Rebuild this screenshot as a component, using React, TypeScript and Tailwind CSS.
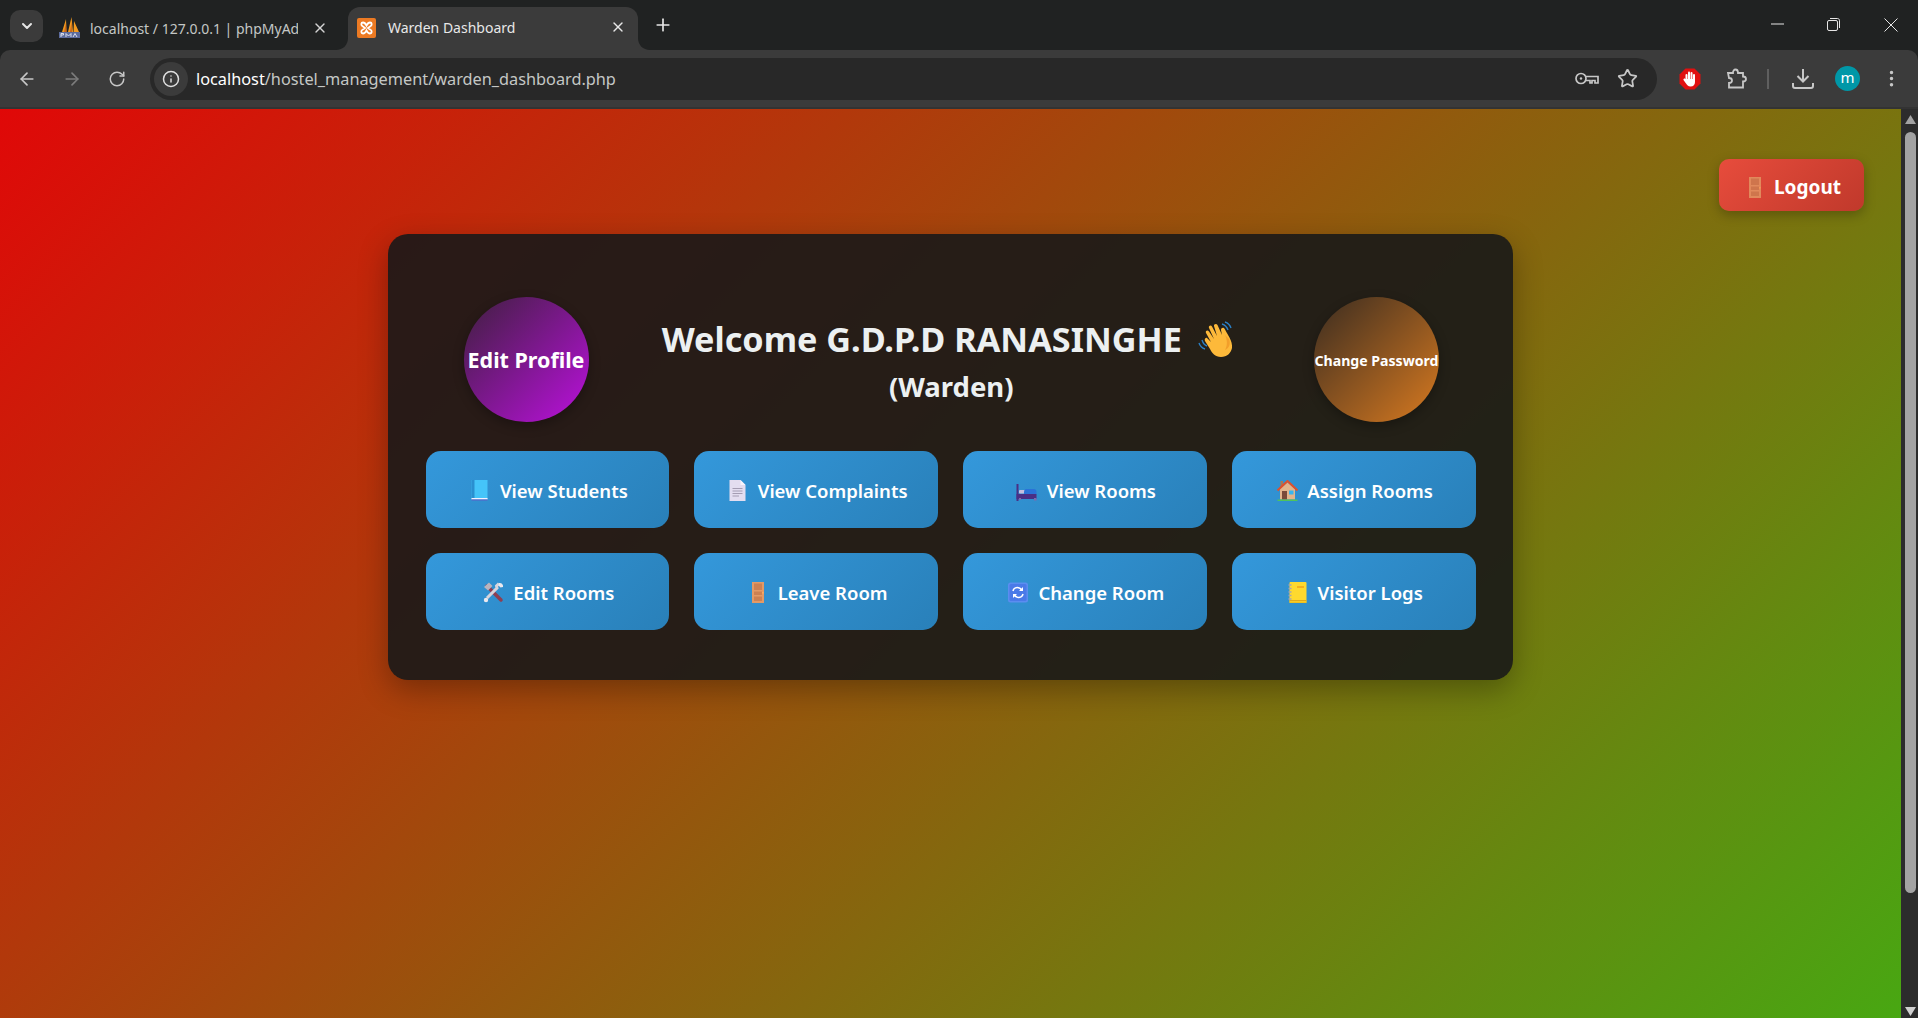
import { ArrowLeft, ArrowRight, ChevronDown, EllipsisVertical, Info, Plus, RotateCw, Star, X } from 'lucide-react';
import type { ReactNode } from 'react';

function BookIcon() {
  return (
    <svg width="17" height="21" viewBox="0 0 17 21">
      <rect x="0.5" y="0" width="16" height="19" fill="#45c4f9" />
      <rect x="0.5" y="0" width="3" height="19" fill="#2a8fd0" />
      <rect x="0.5" y="18" width="16" height="1.5" fill="#f2f2ff" />
      <rect x="0.5" y="19.5" width="16" height="1" fill="#5c5fc8" />
    </svg>
  );
}

function DocIcon() {
  return (
    <svg width="17" height="21" viewBox="0 0 17 21">
      <path d="M0.5 0H11.5L16.5 5V21H0.5Z" fill="#e3ddf0" />
      <path d="M11.5 0L16.5 5H11.5Z" fill="#f7f4fc" />
      <path d="M3.5 8.5H13.5M3.5 11H13.5M3.5 13.5H13.5M3.5 16H10" stroke="#a49cb2" strokeWidth="1" />
    </svg>
  );
}

function BedIcon() {
  return (
    <svg width="21" height="20" viewBox="0 0 21 20">
      <rect x="0.5" y="3" width="2" height="17" fill="#4a2f85" />
      <rect x="3" y="9" width="7" height="3.5" rx="1" fill="#c6bfe0" />
      <path d="M8 11C8 8.5 9.5 8 11 8H18C19.5 8 20.5 9 20.5 11V13H8Z" fill="#2a72d8" />
      <rect x="0.5" y="13" width="20" height="5" fill="#4a2f85" />
      <rect x="18" y="17" width="2.5" height="2.5" fill="#7a6bb0" />
      <rect x="3" y="17" width="2" height="2" fill="#7a6bb0" />
    </svg>
  );
}

function HouseIcon() {
  return (
    <svg width="21" height="21" viewBox="0 0 21 21">
      <rect x="3.5" y="1" width="2.5" height="6" fill="#a87858" />
      <path d="M3 9L10.5 2.5L18 9V19.5H3Z" fill="#e3b48c" />
      <path d="M0.5 10.5L10.5 1L20.5 10.5" fill="none" stroke="#e0502c" strokeWidth="2" />
      <rect x="5" y="11" width="5" height="8.5" fill="#7a4a3a" />
      <rect x="12" y="10.5" width="4.5" height="4" fill="#38b6f0" />
      <rect x="0.5" y="19.5" width="20" height="1.5" fill="#4fc45a" />
    </svg>
  );
}

function ToolsIcon() {
  return (
    <svg width="21" height="21" viewBox="0 0 21 21">
      <path d="M4 4L18 18" stroke="#8f3f52" strokeWidth="3.5" strokeLinecap="round" />
      <path d="M16 1.5L13.5 4L14 6L4 16" stroke="#d8d4dc" strokeWidth="3" fill="none" />
      <path d="M1 5L6 0.5L9.5 4L5 8.5Z" fill="#b9b4bf" />
      <path d="M16 1C18.5 0.5 20.5 2.5 20 5L17.5 5.5L15.5 3.5Z" fill="#ece9ef" />
      <circle cx="3" cy="18" r="2.2" fill="#ece9ef" />
    </svg>
  );
}

function DoorIcon({ className }: { className?: string }) {
  return (
    <svg width="12" height="21" viewBox="0 0 12 21" className={className}>
      <rect x="0" y="0" width="12" height="21" fill="#e39a66" />
      <rect x="2" y="1.5" width="8" height="6.5" fill="#cd8152" />
      <rect x="2" y="9.5" width="8" height="3.5" fill="#cd8152" />
      <rect x="2" y="14.5" width="8" height="4.5" fill="#cd8152" />
      <rect x="10.2" y="10" width="1.4" height="1.6" fill="#ffb060" />
    </svg>
  );
}

function RefreshIcon() {
  return (
    <svg width="20" height="21" viewBox="0 0 20 21">
      <rect x="0" y="0.5" width="20" height="20" rx="2.5" fill="#5b8df0" />
      <rect x="1.5" y="2" width="17" height="17" rx="1.5" fill="#4a7ae8" />
      <path d="M5 9C5.6 6.5 8 5.2 10.5 5.7C11.8 6 12.7 6.6 13.5 7.7M15 12C14.4 14.5 12 15.8 9.5 15.3C8.2 15 7.3 14.4 6.5 13.3" stroke="#fff" strokeWidth="1.6" fill="none" />
      <path d="M15 5V9H11ZM5 16V12H9Z" fill="#fff" />
    </svg>
  );
}

function NotebookIcon() {
  return (
    <svg width="19" height="21" viewBox="0 0 19 21">
      <rect x="1.5" y="0" width="17" height="21" rx="1" fill="#fed92e" />
      <rect x="1.5" y="18" width="17" height="1" fill="#e0a81c" />
      <rect x="1.5" y="19.5" width="17" height="1.5" fill="#f0c020" />
      <rect x="9" y="4" width="7" height="2" fill="#f4b01c" />
      <path d="M0.5 3H3.5M0.5 6.5H3.5M0.5 10H3.5M0.5 13.5H3.5M0.5 17H3.5" stroke="#a8a4b0" strokeWidth="1.4" />
    </svg>
  );
}

function WaveIcon() {
  return (
    <svg width="36" height="36" viewBox="0 0 36 36">
      <path d="M24 3C27 4 29 6 30 9M27 1C30 2 32 4 33 7M1 22C2 25 4 27 7 28M4 19C5 22 6 24 9 25" stroke="#2a7fc4" strokeWidth="1.4" fill="none" />
      <path d="M9 17L13 21L8 12C7 10 9.500 8.500 11 10.500L16 18L11 7C10 5 13 3.500 14 5.500L19 15L16 5C15.500 3 18.500 2 19.500 4L24 14L23 9C23 6.500 26 6 27 8.500C29 13 35 20 34 27C33 32 29 36 23 36C17 36 14 32 12 28L7 20C6 18 8 16 9 17Z" fill="#fdb93a" />
      <path d="M27 14C29 18 30 24 27 29C31 27 33 23 31 18Z" fill="#f29f2b" />
    </svg>
  );
}

const actions: { label: string; icon: ReactNode }[] = [
  { label: 'View Students', icon: <BookIcon /> },
  { label: 'View Complaints', icon: <DocIcon /> },
  { label: 'View Rooms', icon: <BedIcon /> },
  { label: 'Assign Rooms', icon: <HouseIcon /> },
  { label: 'Edit Rooms', icon: <ToolsIcon /> },
  { label: 'Leave Room', icon: <DoorIcon /> },
  { label: 'Change Room', icon: <RefreshIcon /> },
  { label: 'Visitor Logs', icon: <NotebookIcon /> },
];

function PmaIcon() {
  return (
    <svg width="21" height="22" viewBox="0 0 21 22">
      <path d="M3 15L7 2L7.500 15ZM9 15L12.500 0L14 15ZM14.500 15L15 4L20 15Z" fill="#f29a1f" />
      <path d="M5 15L7 6L7.500 15ZM11 15L12.500 5L13 15Z" fill="#c9651b" />
      <rect x="0" y="15" width="21" height="6" fill="#5c6b9c" />
      <path d="M2 20V16.500H4.500V18H2M7 20V16.500L9.500 19L12 16.500V20M14 20L16 16.500L18 20" stroke="#e8ecf6" strokeWidth="0.9" fill="none" />
    </svg>
  );
}

function XamppIcon() {
  return (
    <svg width="19" height="20" viewBox="0 0 19 20">
      <rect width="19" height="20" rx="2" fill="#ec7a23" />
      <path d="M6 4.500C4 4.500 3.500 7.500 6 8.500L8 10L6 11.500C3.500 12.500 4 15.500 6 15.500C8 15.500 9.500 12.500 9.500 12.500C9.500 12.500 11 15.500 13 15.500C15 15.500 15.500 12.500 13 11.500L11 10L13 8.500C15.500 7.500 15 4.500 13 4.500C11 4.500 9.500 7.500 9.500 7.500C9.500 7.500 8 4.500 6 4.500Z" fill="none" stroke="#fff" strokeWidth="1.8" />
    </svg>
  );
}

function BrowserTabs() {
  return (
    <div className="h-[50px] bg-[#202222] flex items-start shrink-0 pl-[10px]">
      <div className="mt-[10px] w-[33px] h-[32px] rounded-[10px] bg-[#3b3b3b] flex items-center justify-center">
        <ChevronDown size={16} strokeWidth={3} className="text-[#e6e6e6]" />
      </div>
      <div className="ml-[16px] w-[289px] h-[42px] mt-[8px] flex items-center pb-[2px] text-[14px] text-[#c4c7c5]">
        <PmaIcon />
        <span className="ml-[10px] w-[208px] overflow-hidden whitespace-nowrap">localhost / 127.0.0.1 | phpMyAdmin</span>
        <X size={16} strokeWidth={2} className="ml-[14px] text-[#d4d4d4]" />
      </div>
      <div className="relative w-[290px] h-[43px] mt-[7px] bg-[#3b3b3b] rounded-t-[12px] flex items-center pl-[9px] pb-[2px] text-[14px] text-[#e8e8e8]">
        <svg width="12" height="12" viewBox="0 0 12 12" className="absolute left-[-12px] bottom-0">
          <path d="M12 0V12H0C7 12 12 7 12 0Z" fill="#3b3b3b" />
        </svg>
        <XamppIcon />
        <span className="ml-[12px] whitespace-nowrap">Warden Dashboard</span>
        <X size={16} strokeWidth={2} className="absolute left-[262px] top-[12px] text-[#e8e8e8]" />
        <svg width="12" height="12" viewBox="0 0 12 12" className="absolute right-[-12px] bottom-0">
          <path d="M0 0V12H12C5 12 0 7 0 0Z" fill="#3b3b3b" />
        </svg>
      </div>
      <Plus size={20} strokeWidth={2} className="ml-[15px] mt-[15px] text-[#e6e6e6]" />
      <div className="ml-auto flex items-start text-[#e6e6e6]">
        <svg width="13" height="2" viewBox="0 0 13 2" className="mt-[23px]">
          <path d="M0 1H13" stroke="currentColor" strokeWidth="1" />
        </svg>
        <svg width="13" height="13" viewBox="0 0 13 13" className="ml-[43px] mt-[18px]">
          <rect x="0.500" y="2.500" width="10" height="10" rx="1.500" fill="none" stroke="currentColor" />
          <path d="M3 0.500H10.500C11.600 0.500 12.500 1.400 12.500 2.500V10" fill="none" stroke="currentColor" />
        </svg>
        <svg width="14" height="14" viewBox="0 0 14 14" className="ml-[44px] mr-[20px] mt-[18px]">
          <path d="M0.500 0.500L13.500 13.500M13.500 0.500L0.500 13.500" stroke="currentColor" strokeWidth="1" />
        </svg>
      </div>
    </div>
  );
}

function BrowserToolbar() {
  return (
    <div className="h-[59px] bg-[#3b3b3b] rounded-t-[10px] border-b-2 border-[#333333] flex items-center shrink-0 text-[#c7c7c7]">
      <ArrowLeft size={20} strokeWidth={2} className="ml-[17px]" />
      <ArrowRight size={20} strokeWidth={2} className="ml-[25px] text-[#7c7c7c]" />
      <RotateCw size={18} strokeWidth={2} className="ml-[26px]" />
      <div className="ml-[24px] w-[1507px] h-[42px] rounded-full bg-[#282828] flex items-center">
        <div className="w-[34px] h-[34px] ml-[4px] rounded-full bg-[#3b3b3b] flex items-center justify-center">
          <Info size={18} strokeWidth={2} className="text-[#e0e0e0]" />
        </div>
        <span className="ml-[8px] pt-[2px] text-[16.3px] text-[#c4c7c5] whitespace-nowrap">
          <span className="text-white">localhost</span>/hostel_management/warden_dashboard.php
        </span>
        <svg width="24" height="13" viewBox="0 0 24 13" fill="none" stroke="#c7c7c7" strokeWidth="1.700" className="ml-auto">
          <circle cx="6" cy="6.500" r="5" />
          <circle cx="6" cy="6.500" r="1.200" fill="#c7c7c7" stroke="none" />
          <path d="M11 4.500H23V11H20V8.500H17V11H15V8.500H11" />
        </svg>
        <Star size={21} strokeWidth={2} className="ml-[18px] mr-[19px]" />
      </div>
      <svg width="22" height="22" viewBox="0 0 22 22" className="ml-[22px]">
        <path d="M6.500 0.500H15.500L21.500 6.500V15.500L15.500 21.500H6.500L0.500 15.500V6.500Z" fill="#e01010" />
        <rect x="6.500" y="6" width="2" height="8" rx="1" fill="#fff" />
        <rect x="9" y="3.500" width="2" height="9" rx="1" fill="#fff" />
        <rect x="11.500" y="4" width="2" height="9" rx="1" fill="#fff" />
        <rect x="14" y="6" width="2" height="8" rx="1" fill="#fff" />
        <path d="M6.500 11H16V14C16 16.500 14.500 18.500 11.500 18.500C9 18.500 8 17 7 15.500L4.500 12C4 11 5.500 10 6.500 11Z" fill="#fff" />
      </svg>
      <svg width="21" height="21" viewBox="0 0 21 21" fill="none" stroke="#c7c7c7" strokeWidth="1.800" className="ml-[25px]">
        <path d="M2 5H7C7 3 8 1.500 9.500 1.500C11 1.500 12 3 12 5H17V8.500C19 8.500 20 9.500 20 11C20 12.500 19 13.500 17 13.500V19.500H3V15C5 15 6 14 6 12.500C6 11 5 10 3 10Z" />
      </svg>
      <div className="ml-[20px] w-[2px] h-[20px] bg-[#5f5f5f]" />
      <svg width="22" height="21" viewBox="0 0 22 21" fill="none" stroke="#c7c7c7" strokeWidth="2" className="ml-[23px]">
        <path d="M11 1V13M5.500 8L11 13.500L16.500 8M1 15V18C1 19.200 1.800 20 3 20H19C20.200 20 21 19.200 21 18V15" />
      </svg>
      <div className="ml-[21px] w-[25px] h-[25px] rounded-full bg-[#0097a7] flex items-center justify-center pb-[2px] text-[15px] text-white">m</div>
      <EllipsisVertical size={21} strokeWidth={2} className="ml-[21px]" />
    </div>
  );
}

function Scrollbar() {
  return (
    <div className="w-[17px] bg-[#2c2c2c] flex flex-col items-center shrink-0 pl-[1px]">
      <svg width="11" height="9" viewBox="0 0 11 9" className="mt-[6px]">
        <path d="M5.500 0L11 9H0Z" fill="#a3a3a3" />
      </svg>
      <div className="mt-[8px] w-[11px] h-[761px] rounded-full bg-[#a3a3a3]" />
      <svg width="11" height="9" viewBox="0 0 11 9" className="mt-auto mb-[2px]">
        <path d="M5.500 9L11 0H0Z" fill="#d0d0d0" />
      </svg>
    </div>
  );
}

export default function App() {
  return (
    <div className="h-[1018px] flex flex-col overflow-hidden bg-[#202222] font-['Noto_Sans',sans-serif]">
      <BrowserTabs />
      <BrowserToolbar />
      <div className="flex flex-1 min-h-0">
        <div className="flex-1 min-w-0 overflow-hidden">
          <div className="h-[928px] pt-[50px] bg-[linear-gradient(135deg,#e00808,#47a812)]">
            <div className="flex justify-end pr-[37px]">
              <button className="w-[145px] h-[52px] pl-[7px] pt-[5px] rounded-[10px] bg-[linear-gradient(135deg,#e74c3c,#c0392b)] shadow-[0_4px_12px_rgba(0,0,0,0.25)] flex items-center justify-center gap-[13px] text-[19px] font-bold text-white">
                <DoorIcon className="opacity-80" />
                Logout
              </button>
            </div>
            <div className="mx-auto mt-[23px] w-[1125px] h-[446px] pt-[63px] px-[37.5px] rounded-[20px] bg-[#181818]/90 shadow-[0_10px_30px_rgba(0,0,0,0.3)]">
              <div className="flex items-center justify-between pl-[38px] pr-[36.5px]">
                <a className="w-[125px] h-[125px] pt-[2px] rounded-full bg-[linear-gradient(135deg,#3f1f3f,#bb11dd)] shadow-[0_4px_12px_rgba(0,0,0,0.3)] flex items-center justify-center text-[21.5px] font-bold text-white whitespace-nowrap">
                  Edit Profile
                </a>
                <div className="flex flex-col items-center pt-[2px] text-[#ecf0f1] font-bold">
                  <div className="flex items-center gap-[16px] pr-[7px] text-[34.2px] leading-[44px]">
                    Welcome G.D.P.D RANASINGHE
                    <WaveIcon />
                  </div>
                  <div className="mt-[6px] pt-[2px] text-[27.5px] leading-[36px]">(Warden)</div>
                </div>
                <a className="w-[125px] h-[125px] pt-[2px] rounded-full bg-[linear-gradient(135deg,#3a2c20,#d87a20)] shadow-[0_4px_12px_rgba(0,0,0,0.3)] flex items-center justify-center text-[14.1px] font-bold text-white whitespace-nowrap">
                  Change Password
                </a>
              </div>
              <div className="mt-[29px] grid grid-cols-4 gap-[25px]">
                {actions.map((action) => (
                  <button
                    key={action.label}
                    className="h-[77px] pt-[2px] rounded-[15px] bg-[linear-gradient(135deg,#3498db,#2980b9)] flex items-center justify-center gap-[7px] text-[18.5px] font-semibold text-white"
                  >
                    <span className="w-[26px] flex justify-center">{action.icon}</span>
                    {action.label}
                  </button>
                ))}
              </div>
            </div>
          </div>
        </div>
        <Scrollbar />
      </div>
    </div>
  );
}
